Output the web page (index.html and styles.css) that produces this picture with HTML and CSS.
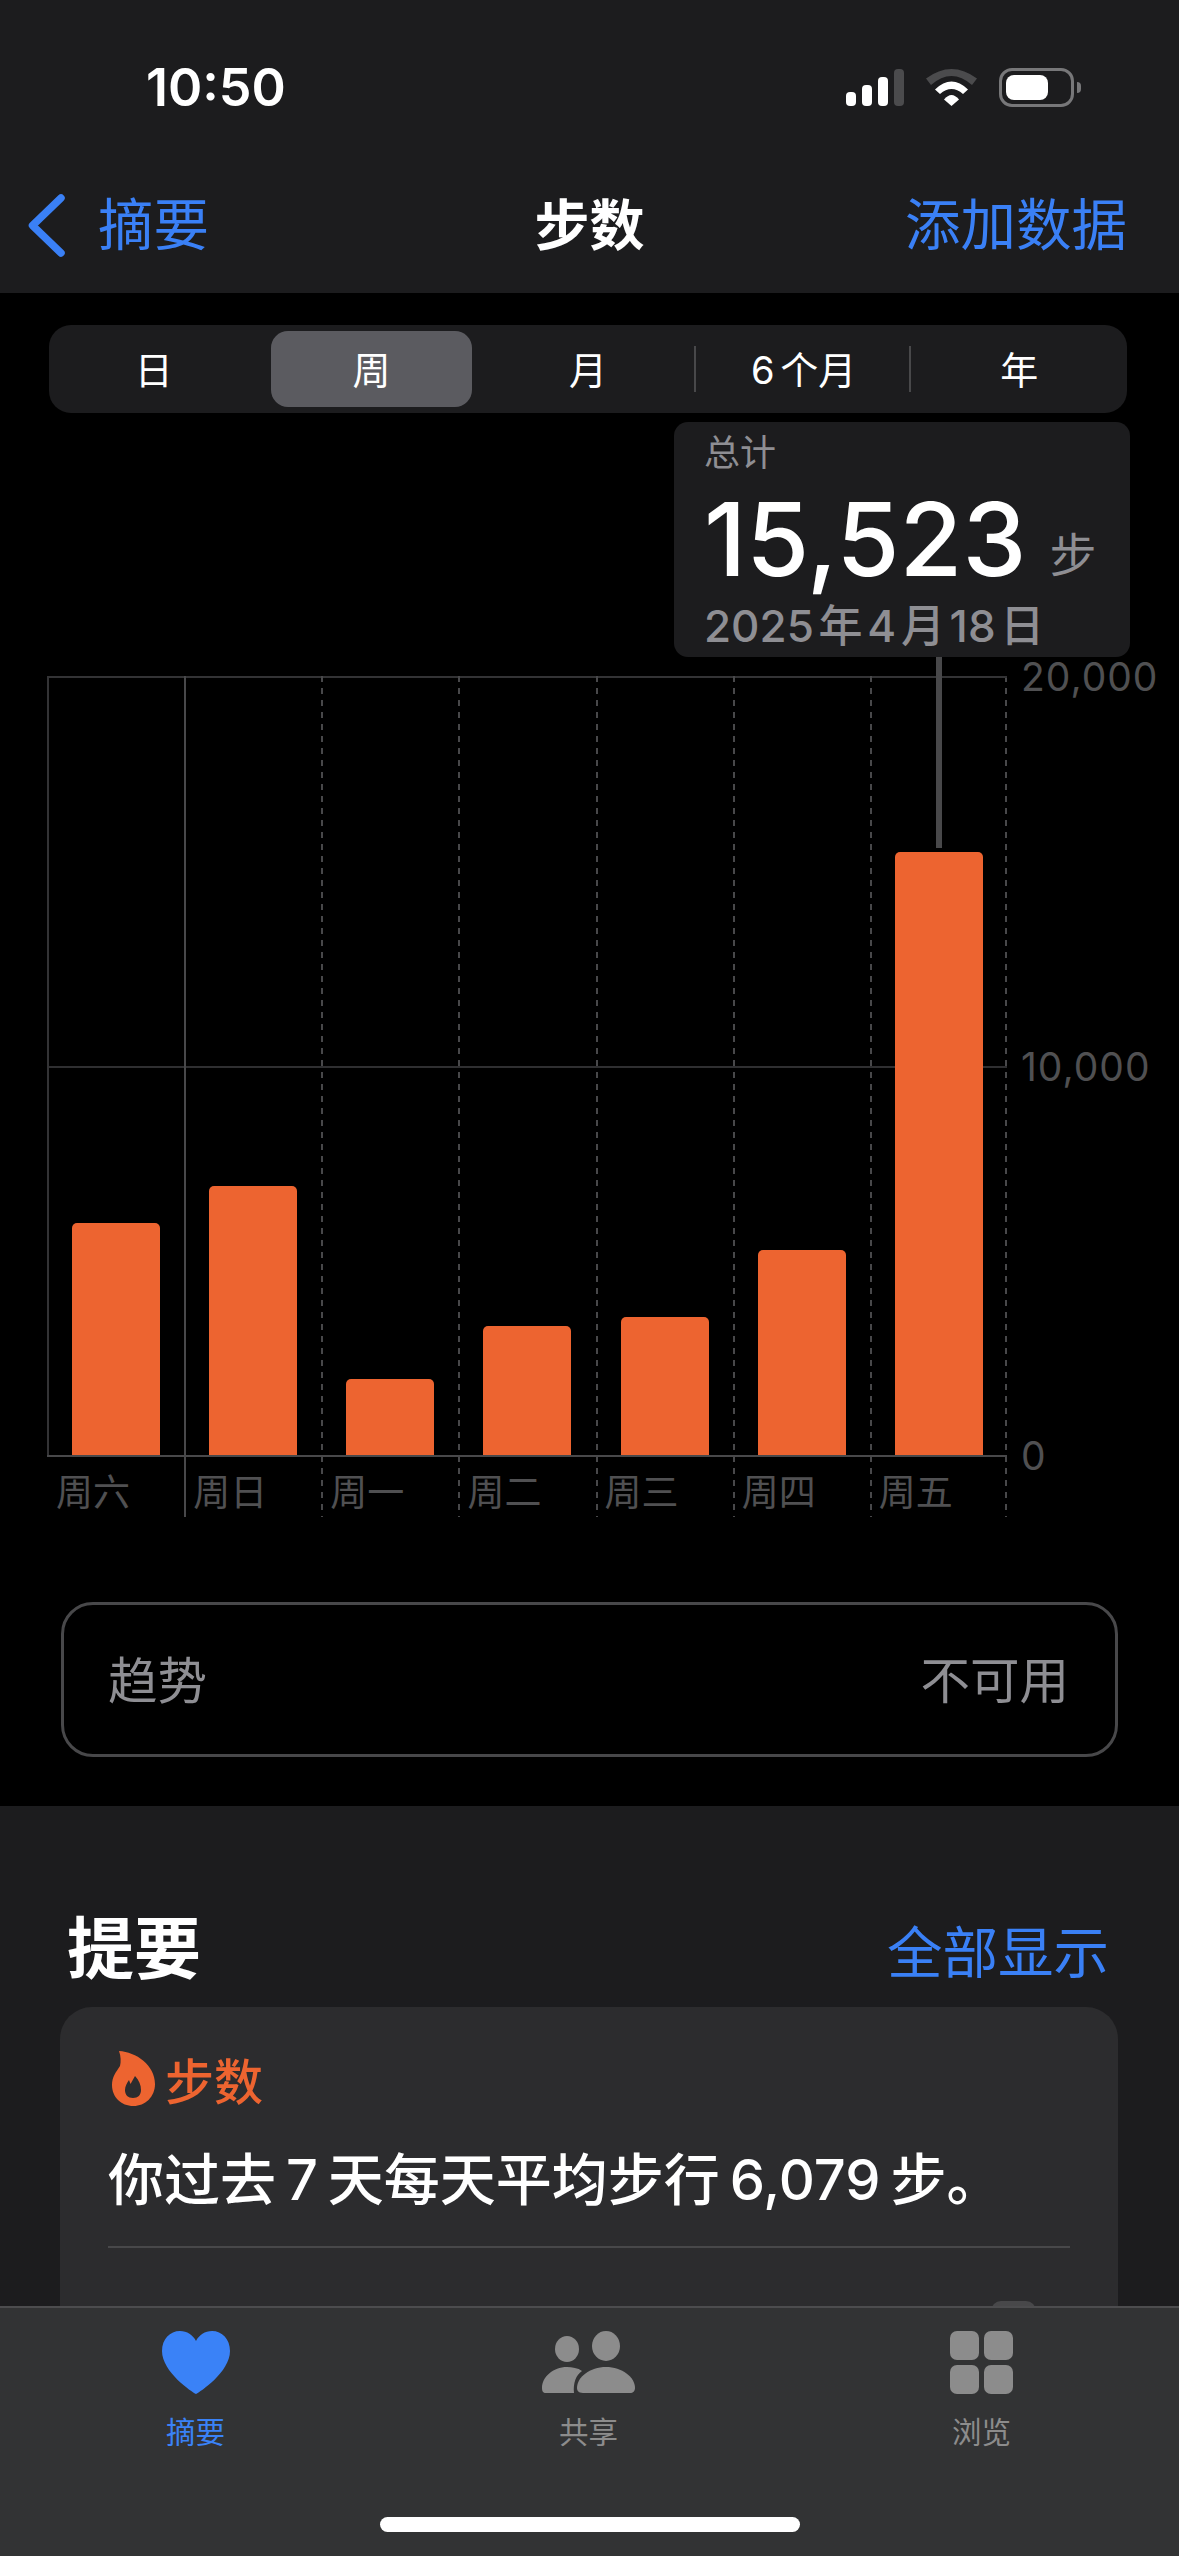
FILE: index.html
```html
<!DOCTYPE html>
<html lang="zh-CN">
<head>
    <meta charset="UTF-8">
    <title>步数</title>
    <link rel="stylesheet" href="styles.css">
</head>
<body>
    <div class="phone">
        <header class="top">
            <div class="status">
                <span class="time">10:50</span>
                <div class="status-icons">
                    <svg class="signal" width="58" height="37" viewBox="0 0 58 37">
                        <rect x="0" y="23" width="10" height="14" rx="4" fill="#fff"/>
                        <rect x="16" y="16" width="10" height="21" rx="4" fill="#fff"/>
                        <rect x="32" y="8" width="10" height="29" rx="4" fill="#fff"/>
                        <rect x="48" y="0" width="10" height="37" rx="4" fill="#4b4b4d"/>
                    </svg>
                    <svg class="wifi" width="51" height="37" viewBox="0 0 51 37">
                        <path d="M0 9.5Q25.5 -9.5 51 9.5L46 16Q25.5 -2 5 16Z" fill="#4b4b4d"/>
                        <path d="M9 20.5Q25.5 4.5 42 20.5L37 25Q25.5 15 14 25Z" fill="#fff"/>
                        <path d="M18 30.5Q25.5 21.5 33 30.5L25.5 37Z" fill="#fff"/>
                    </svg>
                    <div class="battery"><div class="battery-level"></div></div>
                </div>
            </div>
            <nav class="nav">
                <a class="nav-back">
                    <svg width="38" height="63" viewBox="0 0 38 63">
                        <path d="M33 4L4.5 31.5L33 59" fill="none" stroke="#3a80f6" stroke-width="7.5" stroke-linecap="round" stroke-linejoin="round"/>
                    </svg>
                    <span>摘要</span>
                </a>
                <h1 class="nav-title">步数</h1>
                <a class="nav-add">添加数据</a>
            </nav>
        </header>

        <main class="steps">
            <div class="segment">
                <div class="segment-item first">日</div>
                <div class="segment-item active">周</div>
                <div class="segment-item">月</div>
                <div class="segment-item split">6 个月</div>
                <div class="segment-item split">年</div>
            </div>

            <div class="tip">
                <div class="tip-label">总计</div>
                <div class="tip-value">15,523 <span class="tip-unit">步</span></div>
                <div class="tip-date">2025 年 4 月 18 日</div>
            </div>

            <div class="chart">
                <div class="plot">
                    <div class="day first"><div class="bar-area"><div class="bar" style="height:232px"></div></div><span class="day-name">周六</span></div>
                    <div class="day second"><div class="bar-area"><div class="bar" style="height:269px"></div></div><span class="day-name">周日</span></div>
                    <div class="day"><div class="bar-area"><div class="bar" style="height:76px"></div></div><span class="day-name">周一</span></div>
                    <div class="day"><div class="bar-area"><div class="bar" style="height:129px"></div></div><span class="day-name">周二</span></div>
                    <div class="day"><div class="bar-area"><div class="bar" style="height:138px"></div></div><span class="day-name">周三</span></div>
                    <div class="day"><div class="bar-area"><div class="bar" style="height:205px"></div></div><span class="day-name">周四</span></div>
                    <div class="day"><div class="bar-area"><div class="bar picked" style="height:603px"></div></div><span class="day-name">周五</span></div>
                </div>
                <div class="axis">
                    <span>20,000</span>
                    <span>10,000</span>
                    <span>0</span>
                </div>
            </div>

            <div class="trend">
                <span>趋势</span>
                <span>不可用</span>
            </div>
        </main>

        <section class="summary">
            <div class="summary-head">
                <h2>提要</h2>
                <a>全部显示</a>
            </div>
            <div class="card">
                <div class="card-title">
                    <svg width="43" height="55" viewBox="0 0 43 55">
                        <path fill-rule="evenodd" fill="#ed6430" d="M7 0C24 1 43 14 43 33C43 46 33 55 21.5 55C9 55 0 46 0 34C0 26 4 21 8 15C9 11 9 5 7 0ZM23 25C27 29 29 34 29 39C29 44 26 47 21 47C16 47 13 44 13 39C13 35 15 32 17 29L18.5 33Z"/>
                    </svg>
                    <span>步数</span>
                </div>
                <p class="card-text">你过去 7 天每天平均步行 6,079 步。</p>
                <div class="card-line"></div>
                <div class="card-more"><div class="card-peek"></div></div>
            </div>
        </section>

        <footer class="tabs">
            <div class="tab-row">
                <div class="tab active">
                    <svg width="68" height="63" viewBox="0 0 68 63">
                        <path fill="#3a82f7" d="M34 63C30 61 0 41 0 20C0 8 8 0 18 0C25 0 31 4 34 10C37 4 43 0 50 0C60 0 68 8 68 20C68 41 38 61 34 63Z"/>
                    </svg>
                    <span>摘要</span>
                </div>
                <div class="tab">
                    <svg width="93" height="63" viewBox="0 0 93 63">
                        <ellipse cx="25" cy="18" rx="12" ry="13" fill="#8c8c8c"/>
                        <ellipse cx="64" cy="15" rx="14" ry="15" fill="#8c8c8c"/>
                        <path fill="#8c8c8c" d="M41 62C36 62 35 59 35 57C35 46 48 36 64 36C80 36 93 46 93 57C93 60 91 62 88 62Z"/>
                        <path fill="#8c8c8c" d="M4 62C1 62 0 60 0 57C0 46 11 36 25 36C30 36 36 37 40 40C34 44 31 52 32 62Z"/>
                    </svg>
                    <span>共享</span>
                </div>
                <div class="tab">
                    <div class="tab-grid">
                        <i></i><i></i><i></i><i></i>
                    </div>
                    <span>浏览</span>
                </div>
            </div>
            <div class="home-bar"></div>
        </footer>
    </div>
</body>
</html>
```
FILE: styles.css
```css
* {
    box-sizing: border-box;
}
body {
    margin: 0;
    background: #000;
    font-family: Inter, "Noto Sans CJK SC", sans-serif;
    color: #fff;
}
h1, h2, p {
    margin: 0;
}
.phone {
    position: relative;
    width: 1179px;
    height: 2556px;
    overflow: hidden;
}

/* header */
.top {
    height: 293px;
    background: #1c1c1e;
}
.status {
    height: 176px;
    display: flex;
    justify-content: space-between;
    align-items: center;
    padding: 0 105px 1px 146px;
}
.time {
    font-size: 52px;
    font-weight: 600;
}
.status-icons {
    display: flex;
    align-items: center;
}
.wifi {
    margin-left: 22px;
}
.battery {
    position: relative;
    width: 75px;
    height: 39px;
    margin-left: 22px;
    padding: 4px;
    border: 3px solid #777779;
    border-radius: 13px;
}
.battery::after {
    content: "";
    position: absolute;
    left: 75px;
    top: 11px;
    width: 4px;
    height: 11px;
    border-radius: 0 5px 5px 0;
    background: #777779;
}
.battery-level {
    width: 42px;
    height: 100%;
    border-radius: 8px;
    background: #fff;
}
.nav {
    height: 98px;
    display: grid;
    grid-template-columns: 1fr auto 1fr;
    align-items: center;
    font-size: 55.5px;
    line-height: 70px;
}
.nav-back {
    display: flex;
    align-items: center;
    gap: 32px;
    padding-left: 28px;
    color: #3a80f6;
}
.nav-title {
    font-size: 55px;
    font-weight: 700;
}
.nav-add {
    justify-self: end;
    padding-right: 52px;
    color: #3a80f6;
}

/* chart area */
.steps {
    position: relative;
    height: 1513px;
    padding-top: 32px;
    background: #000;
}
.segment {
    display: grid;
    grid-template-columns: repeat(5, 1fr);
    width: 1078px;
    height: 88px;
    margin-left: 49px;
    border-radius: 22px;
    background: #1c1c1e;
    font-size: 38px;
}
.segment-item {
    position: relative;
    display: flex;
    align-items: center;
    justify-content: center;
    padding-bottom: 3px;
    word-spacing: -5px;
}
.segment-item.first {
    padding-right: 6px;
}
.segment-item.active {
    margin: 6px 8px 6px 6px;
    border-radius: 17px;
    background: #5b5b60;
}
.segment-item.split::before {
    content: "";
    position: absolute;
    left: -2px;
    top: 21px;
    bottom: 21px;
    width: 2px;
    background: #48484a;
}
.tip {
    position: absolute;
    left: 674px;
    top: 129px;
    width: 456px;
    height: 235px;
    padding: 8px 0 0 30px;
    border-radius: 14px;
    background: #1c1c1e;
    color: #8e8e93;
}
.tip-label {
    font-size: 36px;
    line-height: 46px;
}
.tip-value {
    margin-top: 7px;
    font-size: 102px;
    line-height: 112px;
    font-weight: 500;
    color: #fff;
    white-space: nowrap;
}
.tip-unit {
    margin-left: -4px;
    font-size: 47px;
    line-height: 1;
    font-weight: 400;
    vertical-align: 4px;
    color: #8e8e93;
}
.tip-date {
    margin-top: 3px;
    font-size: 44px;
    line-height: 56px;
    font-weight: 500;
    word-spacing: -7px;
    white-space: nowrap;
}
.chart {
    display: flex;
    margin: 263px 0 0 47px;
}
.plot {
    display: flex;
    width: 960px;
    height: 841px;
    background:
        linear-gradient(#333335, #333335) 0 0 / 100% 2px no-repeat,
        linear-gradient(#2f2f31, #2f2f31) 0 390px / 100% 2px no-repeat,
        repeating-linear-gradient(#48484a 0 6px, transparent 6px 12px) 100% 0 / 2px 100% no-repeat;
}
.day {
    position: relative;
    flex: 1;
    display: flex;
    flex-direction: column;
    background: repeating-linear-gradient(#48484a 0 6px, transparent 6px 12px) 0 0 / 2px 100% no-repeat;
}
.day.first {
    background: linear-gradient(#333335, #333335) 0 0 / 2px 780px no-repeat;
}
.day.second {
    background: linear-gradient(#48484a, #48484a) 0 0 / 2px 100% no-repeat;
}
.bar-area {
    flex: none;
    height: 781px;
    display: flex;
    align-items: flex-end;
    padding-left: 25px;
    border-bottom: 2px solid #48484a;
}
.bar {
    position: relative;
    width: 88px;
    border-radius: 5px 5px 0 0;
    background: #ed6430;
}
.bar.picked::before {
    content: "";
    position: absolute;
    left: 41px;
    bottom: 100%;
    width: 6px;
    height: 191px;
    margin-bottom: 4px;
    background: #48484a;
}
.day-name {
    margin: 13px 0 0 9px;
    font-size: 37px;
    line-height: 46px;
    color: #505052;
}
.axis {
    height: 819px;
    margin: -19px 0 0 14px;
    display: flex;
    flex-direction: column;
    justify-content: space-between;
    font-size: 39px;
    letter-spacing: 1px;
    line-height: 40px;
    color: #505052;
}
.trend {
    display: flex;
    justify-content: space-between;
    align-items: center;
    width: 1057px;
    height: 155px;
    margin: 85px 0 0 61px;
    padding: 0 46px 4px 44px;
    border: 3px solid #48484a;
    border-radius: 32px;
    font-size: 49.5px;
    color: #8e8e93;
}

/* summary */
.summary {
    height: 750px;
    padding-top: 84px;
    background: #1c1c1e;
}
.summary-head {
    display: flex;
    justify-content: space-between;
    align-items: center;
    height: 117px;
    padding: 0 70px 0 67px;
}
.summary-head h2 {
    margin-bottom: 10px;
    font-size: 67px;
    font-weight: 700;
}
.summary-head a {
    font-size: 55.5px;
    color: #3a80f6;
}
.card {
    width: 1058px;
    height: 400px;
    margin-left: 60px;
    padding: 36px 48px 0;
    border-radius: 32px;
    background: #2c2c2e;
}
.card-title {
    display: flex;
    align-items: center;
    gap: 10px;
    margin-left: 4px;
    font-size: 49px;
    font-weight: 500;
    color: #ed6430;
}
.card-text {
    margin-top: 31px;
    font-size: 56px;
    font-weight: 500;
    line-height: 70px;
    word-spacing: -5px;
    white-space: nowrap;
}
.card-line {
    height: 2px;
    margin-top: 31px;
    background: #48484a;
}
.card-more {
    display: flex;
    justify-content: flex-end;
    margin: 53px 34px 0 0;
}
.card-peek {
    width: 45px;
    height: 30px;
    border-radius: 10px 10px 0 0;
    background: #48484a;
}

/* tab bar */
.tabs {
    position: absolute;
    left: 0;
    right: 0;
    bottom: 0;
    height: 250px;
    border-top: 2px solid #4c4c4e;
    background: #323334;
}
.tab-row {
    display: grid;
    grid-template-columns: repeat(3, 393px);
    margin-left: -1px;
    padding-top: 23px;
}
.tab {
    display: flex;
    flex-direction: column;
    align-items: center;
    gap: 20px;
    font-size: 29.5px;
    line-height: 36px;
    color: #8c8c8c;
}
.tab.active {
    color: #3a82f7;
}
.tab-grid {
    display: grid;
    grid-template-columns: repeat(2, 29px);
    gap: 5px;
}
.tab-grid i {
    height: 29px;
    border-radius: 7px;
    background: #8c8c8c;
}
.home-bar {
    width: 420px;
    height: 15px;
    margin: 67px auto 0;
    border-radius: 8px;
    background: #fff;
}
```
